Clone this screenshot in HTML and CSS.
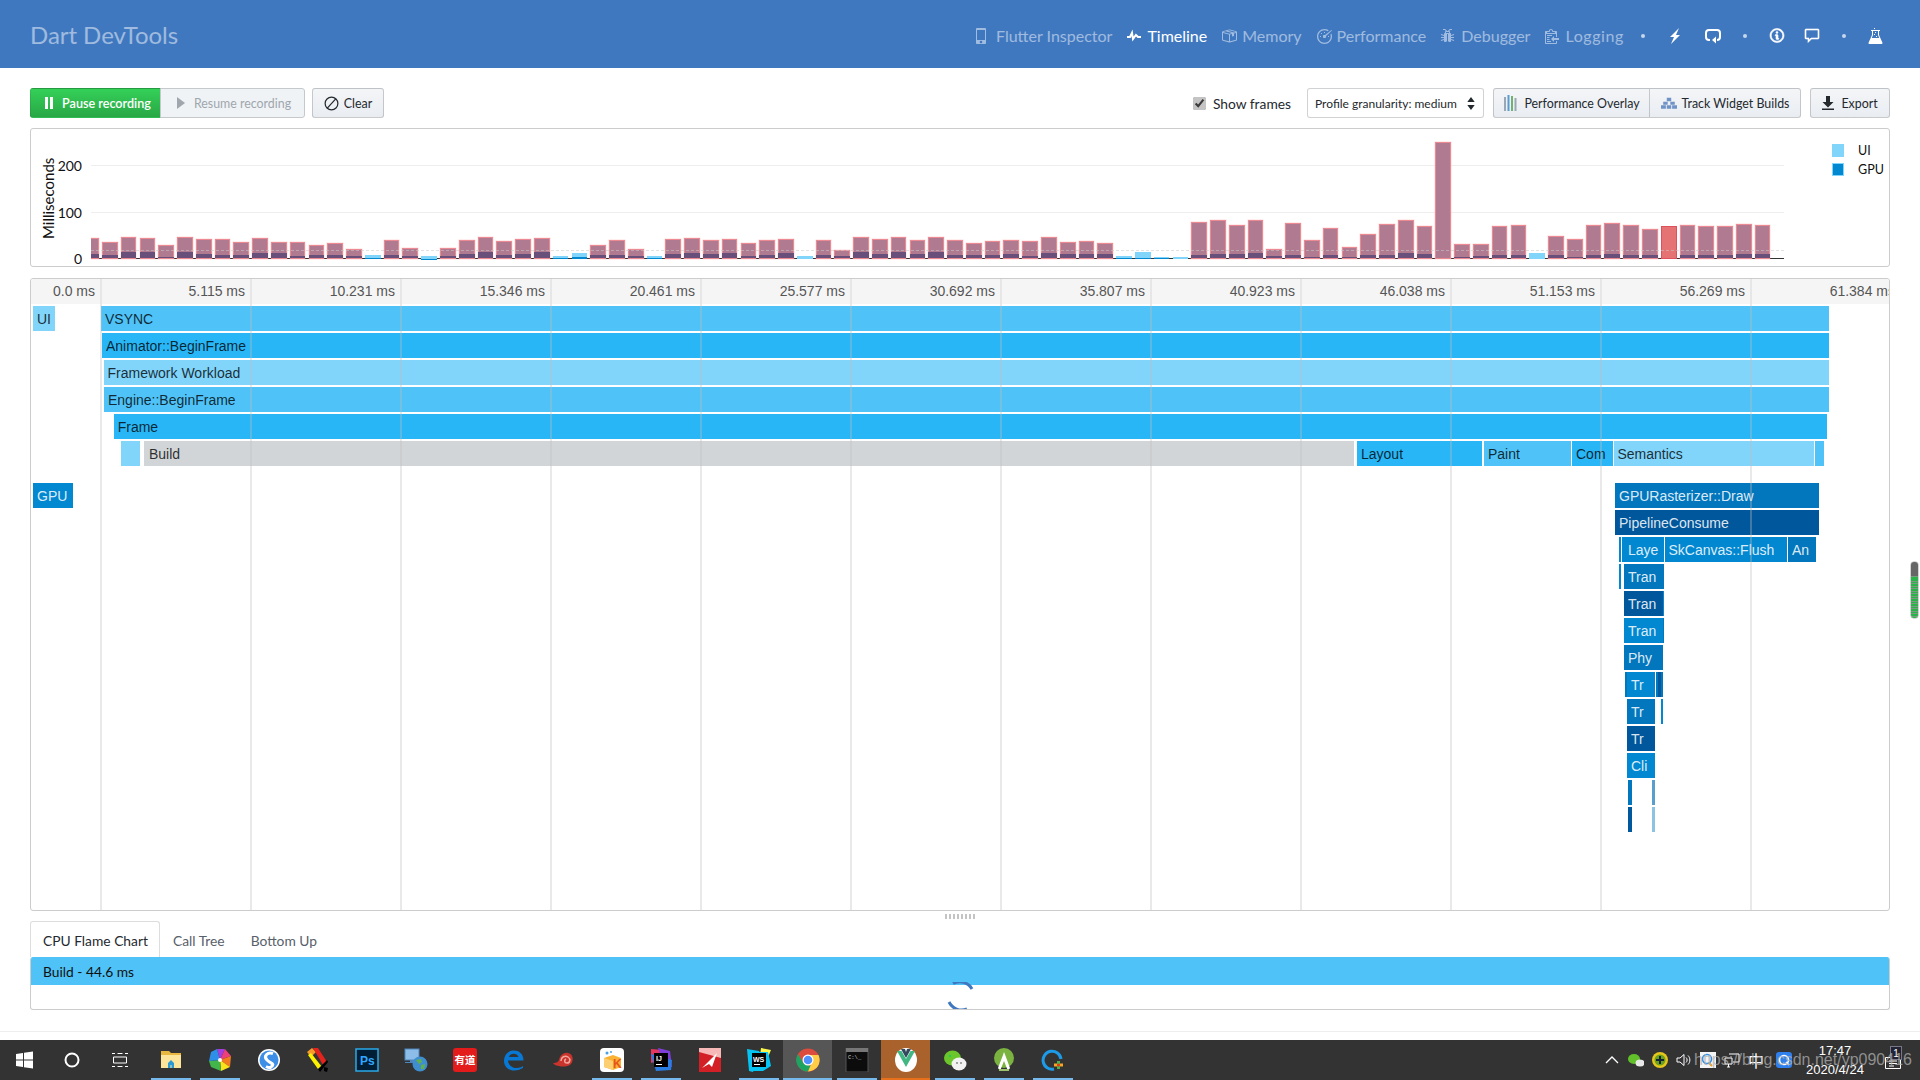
FILE: index.html
```html
<!DOCTYPE html>
<html lang="en">
<head>
<meta charset="utf-8">
<title>Dart DevTools</title>
<link rel="stylesheet" href="styles.css">
</head>
<body>
<header class="masthead">
  <div class="brand">Dart DevTools</div>
  <nav class="nav">
    <a class="tab"><svg class="ic" viewBox="0 0 16 16"><path transform="translate(1)" d="M9 0H1C.45 0 0 .45 0 1v14c0 .55.45 1 1 1h8c.55 0 1-.45 1-1V1c0-.55-.45-1-1-1zM5 15.3c-.72 0-1.3-.58-1.3-1.3 0-.72.58-1.3 1.3-1.3.72 0 1.3.58 1.3 1.3 0 .72-.58 1.3-1.3 1.3zM9 12H1V2h8v10z"/></svg>Flutter Inspector</a>
    <a class="tab active"><svg class="ic" viewBox="0 0 16 16"><path transform="translate(1)" d="M11.5 8L8.8 5.4 6.6 8.5 5.5 1.6 2.38 8H0v2h3.6l.9-1.8.9 5.4L9 8.5l1.6 1.5H14V8h-2.5z"/></svg>Timeline</a>
    <a class="tab"><svg class="ic" viewBox="0 0 16 16"><path d="M1 4.27v7.47c0 .45.3.84.75.97l6.5 1.73c.16.05.34.05.5 0l6.5-1.73c.45-.13.75-.52.75-.97V4.27c0-.45-.3-.84-.75-.97l-6.5-1.74a1.4 1.4 0 0 0-.5 0L1.75 3.3c-.45.13-.75.52-.75.97zm7 9.09l-6-1.59V5l6 1.61v6.75zM2 4l2.5-.67L11 5.06l-2.5.67L2 4zm13 7.77l-6 1.59V6.61l2-.55V8.5l2-.53V5.53L15 5v6.77zm-2-7.24L6.5 2.8l2-.53L15 4l-2 .53z"/></svg>Memory</a>
    <a class="tab"><svg class="ic" viewBox="0 0 16 16"><path d="M9 5H8V4h1v1zm4 3h-1v1h1V8zM6 5H5v1h1V5zM5 8H4v1h1V8zm11-5.5l-.5-.5L9 7c-.06-.02-1 0-1 0-.55 0-1 .45-1 1v1c0 .55.45 1 1 1h1c.55 0 1-.45 1-1v-.92l6-5.58zm-1.59 4.09c.19.61.3 1.25.3 1.91 0 3.42-2.78 6.2-6.2 6.2-3.42 0-6.21-2.78-6.21-6.2 0-3.42 2.78-6.2 6.2-6.2 1.2 0 2.31.34 3.27.94l.94-.94A7.459 7.459 0 0 0 8.51 1C4.36 1 1 4.36 1 8.5 1 12.64 4.36 16 8.5 16c4.14 0 7.5-3.36 7.5-7.5 0-1.03-.2-2.02-.59-2.91l-1 1z"/></svg>Performance</a>
    <a class="tab"><svg class="ic" viewBox="0 0 16 16"><path d="M11 10h3V9h-3V8l3.17-1.03-.34-.94L11 7V6c0-.55-.45-1-1-1V4c0-.48-.36-.88-.83-.97L10.2 2H12V1H9.8l-2 2h-.59L5.2 1H3v1h1.8l1.03 1.03C5.36 3.12 5 3.51 5 4v1c-.55 0-1 .45-1 1v1l-2.83-.97-.34.94L4 8v1H1v1h3v1L.83 12.03l.34.94L4 12v1c0 .55.45 1 1 1h1l1-1V6h1v7l1 1h1c.55 0 1-.45 1-1v-1l2.83.97.34-.94L11 11v-1zM9 5H6V4h3v1z"/></svg>Debugger</a>
    <a class="tab spaced"><svg class="ic" viewBox="0 0 16 16"><path transform="translate(1)" d="M2 13h4v1H2v-1zm5-6H2v1h5V7zm2 3V8l-3 3 3 3v-2h5v-2H9zM4.5 9H2v1h2.5V9zM2 12h2.5v-1H2v1zm9 1h1v2c-.02.28-.11.52-.3.7-.19.18-.42.28-.7.3H1c-.55 0-1-.45-1-1V4c0-.55.45-1 1-1h3c0-1.11.89-2 2-2 1.11 0 2 .89 2 2h3c.55 0 1 .45 1 1v5h-1V6H1v9h10v-2zM2 5h8c0-.55-.45-1-1-1H8c-.55 0-1-.45-1-1s-.45-1-1-1-1 .45-1 1-.45 1-1 1H3c-.55 0-1 .45-1 1z"/></svg>Logging</a>
    <div class="nav-actions">
      <i class="dot"></i>
      <svg class="ic white" viewBox="0 0 16 16"><path transform="translate(3)" d="M10 7H6l3-7-9 9h4l-3 7 9-9z"/></svg>
      <svg class="ic white" viewBox="0 0 16 16"><path d="M5 12H4a3 3 0 0 1-3-3V5a3 3 0 0 1 3-3h8a3 3 0 0 1 3 3v4a3 3 0 0 1-3 3" fill="none" stroke="#fff" stroke-width="2"/><path d="M11 8.500L7 12l4 3.500z"/></svg>
      <i class="dot"></i>
      <svg class="ic white heavy" viewBox="0 0 16 16"><path transform="translate(1 -.5)" d="M6.3 5.69a.942.942 0 0 1-.28-.7c0-.28.09-.52.28-.7.19-.18.42-.28.7-.28.28 0 .52.09.7.28.18.19.28.42.28.7 0 .28-.09.52-.28.7a1 1 0 0 1-.7.3c-.28 0-.52-.11-.7-.3zM8 7.990c-.02-.25-.11-.48-.31-.69-.2-.19-.42-.3-.69-.31H6c-.27.02-.48.13-.69.31-.2.2-.3.44-.31.69h1v3c.02.27.11.5.31.69.2.2.42.31.69.31h1c.27 0 .48-.11.69-.31.2-.19.3-.42.31-.69H8V7.980v.01zM7 2.300c-3.140 0-5.700 2.540-5.700 5.680 0 3.140 2.560 5.700 5.700 5.700s5.700-2.550 5.700-5.700c0-3.150-2.560-5.690-5.700-5.690v.01zM7 .98c3.860 0 7 3.140 7 7s-3.140 7-7 7-7-3.120-7-7 3.140-7 7-7z"/></svg>
      <svg class="ic white tuck heavy" viewBox="0 0 16 16"><path d="M14 1H2c-.55 0-1 .45-1 1v8c0 .55.45 1 1 1h2v3.500L7.500 11H14c.55 0 1-.45 1-1V2c0-.55-.45-1-1-1zm0 9H7l-2 2v-2H2V2h12v8z"/></svg>
      <i class="dot"></i>
      <svg class="ic white" viewBox="0 0 16 16"><path d="M14.380 14.590L11 7V3h1V2H3v1h1v4L.63 14.590A1 1 0 0 0 1.540 16h11.940c.72 0 1.200-.75.91-1.410h-.01zM3.750 10L5 7V3h5v4l1.250 3h-7.500zM8 8h1v1H8V8zM7 7H6V6h1v1zm0-3h1v1H7V4zm0-3H6V0h1v1z"/></svg>
    </div>
  </nav>
</header>

<main class="content">
  <div class="toolbar">
    <div class="btn-group">
      <button class="btn primary w-pause"><svg class="bi" viewBox="0 0 10 12"><path d="M1 0h3v12H1zM6 0h3v12H6z"/></svg>Pause recording</button>
      <button class="btn disabled w-resume"><svg class="bi" viewBox="0 0 10 12"><path d="M1 0l8 6-8 6z"/></svg>Resume recording</button>
    </div>
    <button class="btn w-clear"><svg class="bi big" viewBox="0 0 16 16"><circle cx="8" cy="8" r="6.800" fill="none" stroke="#24292e" stroke-width="1.300"/><path d="M3.500 13l9-10" stroke="#24292e" stroke-width="1.300"/></svg>Clear</button>
    <div class="spacer"></div>
    <label class="check"><input type="checkbox" checked>Show frames</label>
    <div class="select">Profile granularity: medium<svg class="updown" viewBox="0 0 8 14"><path d="M4 0l4 5.500H0zM4 14L0 8.500h8z"/></svg></div>
    <div class="btn-group">
      <button class="btn w-overlay"><svg class="bi wide" viewBox="0 0 16 16"><path fill="#9aa7b5" d="M1 2h2v14H1z"/><path fill="#5b9bd5" d="M4.500 0h2v16h-2z"/><path fill="#6fb36f" d="M8 1h2v15H8z"/><path fill="#9aa7b5" d="M11.500 3h2v13h-2z"/></svg>Performance Overlay</button>
      <button class="btn w-track"><svg class="bi wide" viewBox="0 0 18 14"><path fill="#6f93c7" d="M6.500 1h5v4h-5zM2.500 5.500h5v3.500h-5zM10.500 5.500h5v3.500h-5zM0 9.500h5.500v4H0zM6.500 9.500h5v4h-5zM12.500 9.500H18v4h-5.500z"/></svg>Track Widget Builds</button>
    </div>
    <button class="btn w-export"><svg class="bi dl" viewBox="0 0 12 14"><path d="M4 0h4v6h3.500L6 11.500.5 6H4zM0 12.500h12V14H0z"/></svg>Export</button>
  </div>

  <section class="panel chart">
    <div class="y-title">Milliseconds</div>
    <div class="plot">
      <span class="grid g200"><b>200</b></span>
      <span class="grid g100"><b>100</b></span>
      <span class="grid g0"><b>0</b></span>
      <div class="bars" id="bars"></div>
      <span class="target"></span>
    </div>
    <ul class="legend">
      <li><i class="sw sw-ui"></i>UI</li>
      <li><i class="sw sw-gpu"></i>GPU</li>
    </ul>
  </section>

  <section class="panel flame">
    <div class="ticks">
      <span class="tick first">0.0 ms</span><span class="tick">5.115 ms</span><span class="tick">10.231 ms</span><span class="tick">15.346 ms</span><span class="tick">20.461 ms</span><span class="tick">25.577 ms</span><span class="tick">30.692 ms</span><span class="tick">35.807 ms</span><span class="tick">40.923 ms</span><span class="tick">46.038 ms</span><span class="tick">51.153 ms</span><span class="tick">56.269 ms</span><span class="tick">61.384 ms</span>
    </div>
    <div class="flame-area">
      <div class="row"><span class="fb a3" style="left:2px;width:22px">UI</span><span class="fb a2" style="left:70px;width:1728px">VSYNC</span></div>
      <div class="row"><span class="fb a1" style="left:71px;width:1727px">Animator::BeginFrame</span></div>
      <div class="row"><span class="fb a3" style="left:72.500px;width:1725.500px">Framework Workload</span></div>
      <div class="row"><span class="fb a2" style="left:73px;width:1725px">Engine::BeginFrame</span></div>
      <div class="row"><span class="fb a1" style="left:82.700px;width:1713.300px">Frame</span></div>
      <div class="row"><span class="fb a3" style="left:90px;width:19px"></span><span class="fb grey" style="left:113px;width:1210px">Build</span><span class="fb a1" style="left:1326px;width:125px">Layout</span><span class="fb a2" style="left:1453px;width:87px">Paint</span><span class="fb a1" style="left:1541px;width:41px">Com</span><span class="fb a3" style="left:1582.500px;width:200.500px">Semantics</span><span class="fb a2" style="left:1784px;width:9px"></span></div>
      <div class="row group"><span class="fb b1" style="left:2px;width:40px">GPU</span><span class="fb b2" style="left:1584px;width:204px">GPURasterizer::Draw</span></div>
      <div class="row"><span class="fb b3" style="left:1584px;width:204px">PipelineConsume</span></div>
      <div class="row"><span class="fb b1" style="left:1587.500px;width:2.500px"></span><span class="fb b1" style="left:1591px;width:1.500px"></span><span class="fb b1" style="left:1593px;width:40px">Laye</span><span class="fb b1" style="left:1633.500px;width:122.500px">SkCanvas::Flush</span><span class="fb b2" style="left:1757px;width:28px">An</span></div>
      <div class="row"><span class="fb b1" style="left:1588px;width:1.500px"></span><span class="fb b2" style="left:1593px;width:40px">Tran</span></div>
      <div class="row"><span class="fb b3" style="left:1593px;width:39px">Tran</span><span class="fb b1" style="left:1632px;width:1px"></span></div>
      <div class="row"><span class="fb b1" style="left:1593px;width:39px">Tran</span><span class="fb b2" style="left:1632px;width:1px"></span></div>
      <div class="row"><span class="fb b2" style="left:1593px;width:39px">Phy</span></div>
      <div class="row"><span class="fb b2" style="left:1594px;width:2px"></span><span class="fb b1" style="left:1596px;width:28px">Tr</span><span class="fb b2" style="left:1624.500px;width:2px"></span><span class="fb b3" style="left:1627px;width:2.500px"></span><span class="fb b2" style="left:1630px;width:2px"></span></div>
      <div class="row"><span class="fb b2" style="left:1596px;width:28px">Tr</span><span class="fb b1" style="left:1630px;width:1.500px"></span></div>
      <div class="row"><span class="fb b3" style="left:1596px;width:28px">Tr</span></div>
      <div class="row"><span class="fb b1" style="left:1596px;width:28px">Cli</span></div>
      <div class="row"><span class="fb b2" style="left:1597px;width:3.500px"></span><span class="fb b4" style="left:1620.500px;width:3.500px"></span></div>
      <div class="row"><span class="fb b3" style="left:1597px;width:3.500px"></span><span class="fb b5" style="left:1620.500px;width:3.500px"></span></div>
      <div class="rules" aria-hidden="true">
        <i class="rule first"></i><i class="rule"></i><i class="rule"></i><i class="rule"></i><i class="rule"></i><i class="rule"></i><i class="rule"></i><i class="rule"></i><i class="rule"></i><i class="rule"></i><i class="rule"></i><i class="rule"></i>
      </div>
    </div>
  </section>

  <div class="splitter"></div>

  <div class="tabs">
    <span class="subtab on">CPU Flame Chart</span>
    <span class="subtab">Call Tree</span>
    <span class="subtab">Bottom Up</span>
  </div>
  <section class="panel details">
    <div class="details-bar">Build - 44.6 ms</div>
    <svg class="spinner" viewBox="0 0 30 30"><path d="M8 1.500A14 14 0 0 1 27 7M4 20A14 14 0 0 0 22 27" fill="none" stroke="#4078c0" stroke-width="3"/></svg>
  </section>
</main>
<div class="footer-line"></div>

<div class="scroll-thumb"></div>

<footer class="taskbar">
  <span class="slot narrow"><svg class="ti" viewBox="0 0 24 24"><path fill="#fff" d="M4 6l7-1v6.500H4zM12 4.800l9-1.300v8H12zM4 12.500h7V19l-7-1zM12 12.500h9v8l-9-1.300z"/></svg></span>
  <span class="slot narrow"><svg class="ti" viewBox="0 0 24 24"><circle cx="12" cy="12" r="6.500" fill="none" stroke="#fff" stroke-width="2"/></svg></span>
  <span class="slot narrow after"><svg class="ti" viewBox="0 0 24 24"><path fill="none" stroke="#fff" d="M4 5.500h3M9.500 5.500h5M17 5.500h3M4 18.500h3M9.500 18.500h5M17 18.500h3M5.500 9h13v6h-13z"/></svg></span>
  <span class="slot run"><svg class="ti" viewBox="0 0 24 24"><path fill="#e8b740" d="M2 3h8l2 2h10v3H2z"/><path fill="#fde49b" d="M2 7h20v13H2z"/><path fill="#2a9ad4" d="M9 20v-5l3-3 3 3v5h-2.500v-3h-1v3z"/></svg></span>
  <span class="slot run"><svg class="ti" viewBox="0 0 24 24"><path fill="#a33de0" d="M12 12L9 1h8z"/><path fill="#ec3f7c" d="M12 12l5-11 6 7z"/><path fill="#f47c20" d="M12 12l11-4-1 11z"/><path fill="#fbe21a" d="M12 12l10 7-9 4z"/><path fill="#42b64a" d="M12 12l1 11-10-4-2-6z"/><path fill="#2d8fe8" d="M12 12L1 13l2-9 6-3z"/><circle cx="12" cy="12" r="2" fill="#fff"/></svg></span>
  <span class="slot"><svg class="ti" viewBox="0 0 24 24"><circle cx="12" cy="12" r="11" fill="#fff"/><circle cx="12" cy="12" r="9.500" fill="#3d8ee6"/><path d="M16 5.500C11 3.500 6 8 10 12s8.500 3.500 4 7c-1 .8-3 .6-5-.5" fill="none" stroke="#fff" stroke-width="3"/></svg></span>
  <span class="slot"><svg class="ti" viewBox="0 0 24 24"><path fill="#f59b2b" d="M1 4l5-4 4 4-5 5z"/><path fill="#e3231c" d="M7 0h5l9 14-4 3z"/><path fill="#fff200" d="M2 7l3-2 11 14-4 2z"/><path fill="#000" d="M12 21l9-9 1 2-8 10zM18 19l4 1-1 4-3-1z"/></svg></span>
  <span class="slot"><svg class="ti" viewBox="0 0 24 24"><rect x="1" y="1" width="22" height="22" fill="#001e36" stroke="#2aa9e8" stroke-width="1.500"/><text class="svgt" x="5" y="17" fill="#31a8ff">Ps</text></svg></span>
  <span class="slot"><svg class="ti" viewBox="0 0 24 24"><rect x="1" y="1" width="14" height="11" fill="#8bbde8" stroke="#4f86bf"/><path fill="#4f86bf" d="M6 12h4v3H1v-1h5z"/><circle cx="16" cy="16" r="7.500" fill="#3f8fd0"/><path fill="#62b04c" d="M12 12l5-1 1 3-3 2zM17 17l4-1-1 5-3 0z"/></svg></span>
  <span class="slot"><svg class="ti" viewBox="0 0 24 24"><rect x="0" y="0" width="24" height="24" rx="3" fill="#e31b1b"/><text class="svgc" x="12" y="16" fill="#fff" text-anchor="middle">有道</text></svg></span>
  <span class="slot"><svg class="ti" viewBox="0 0 24 24"><path d="M21 18c-3 2.800-14 4-15-5.500h15.500C21.500 5 16 2 11 2.500 5 3 2 8 2 13c0 6 5 9.500 10 9.500 4 0 7-1.500 9-2.500zM7 9c1-4 8-4.500 9.500 0z" fill="#0878d4"/></svg></span>
  <span class="slot"><svg class="ti" viewBox="0 0 24 24"><path fill="#c9342c" d="M2 15c4 0 5-1 6-3 1-5 5-8 9-7 5 1 6 7 3 11-3 3-9 3-12 2-2 0-5-1-6-3z"/><path fill="none" stroke="#f4a79f" stroke-width="1.500" d="M10 13c0-4 4-6 7-4s2 6-1 6-3-3-1-4"/></svg></span>
  <span class="slot run"><svg class="ti" viewBox="0 0 24 24"><rect width="24" height="24" rx="4" fill="#fff"/><path fill="#f9b233" d="M4 10l9-3 8 3v9l-8 3-9-3z"/><path fill="#fcd072" d="M4 10l9 3v9l-9-3z"/><circle cx="7" cy="5" r="1.500" fill="#4aa0e6"/><circle cx="11" cy="4" r="1" fill="#4aa0e6"/><text class="svgt" x="13" y="20" fill="#e8541c">K</text></svg></span>
  <span class="slot run"><svg class="ti" viewBox="0 0 24 24"><path fill="#e4365e" d="M2 1l12 1 3 8-15 5z"/><path fill="#7d3fd8" d="M9 0l12 3 2 16-8-1z"/><path fill="#2a7de1" d="M2 6l5 17 15-1 1-10z"/><rect x="5" y="5" width="14" height="14" fill="#000"/><text class="svgs" x="7" y="13" fill="#fff">IJ</text><path fill="#fff" d="M7 16h6v1H7z"/></svg></span>
  <span class="slot"><svg class="ti" viewBox="0 0 24 24"><rect x="1" width="22" height="24" fill="#d31f26"/><path fill="#f7b9b7" d="M1 0h22v10L1 4z"/><path fill="#fff" d="M4 20L19 5l-5 14-3-3z"/></svg></span>
  <span class="slot run"><svg class="ti" viewBox="0 0 24 24"><path fill="#07c3f2" d="M0 1l12 2 2 4-8 17-4-1z"/><path fill="#fcf84a" d="M14 0l10 2-3 7-8-1z"/><path fill="#07c3f2" d="M12 4l9 0 3 14-8 5H6z"/><rect x="5" y="5" width="14" height="14" fill="#000"/><text class="svgs" x="6" y="13.500" fill="#fff">WS</text><path fill="#fff" d="M7 16h6v1H7z"/></svg></span>
  <span class="slot run hot"><svg class="ti" viewBox="0 0 24 24"><circle cx="12" cy="12" r="11.500" fill="#dd4b3e"/><path fill="#1da462" d="M12 23.500A11.500 11.500 0 0 1 2 6l6 10 7 2z"/><path fill="#ffcd45" d="M12 23.500A11.500 11.500 0 0 0 22.500 7H12l4 7z"/><circle cx="12" cy="12" r="5.500" fill="#fff"/><circle cx="12" cy="12" r="4.300" fill="#4d90fe"/></svg></span>
  <span class="slot run"><svg class="ti" viewBox="0 0 24 24"><rect x="1" width="22" height="24" fill="#0c0c0c" stroke="#555"/><rect x="1" width="22" height="4" fill="#777"/><text class="svgm" x="3" y="11" fill="#ccc">C:\_</text></svg></span>
  <span class="slot run vue"><svg class="ti" viewBox="0 0 24 24"><ellipse cx="12" cy="12" rx="11" ry="12" fill="#fff"/><path fill="#41b883" d="M3 3h4.500L12 11l4.500-8H21L12 19z"/><path fill="#35495e" d="M7 1h4l1 3 1-3h4l-5 9z"/></svg></span>
  <span class="slot run"><svg class="ti" viewBox="0 0 24 24"><ellipse cx="9.500" cy="10" rx="8.500" ry="7.500" fill="#6cc62b"/><circle cx="7" cy="8" r="1.200" fill="#2c5"/><ellipse cx="16" cy="16" rx="7.500" ry="6.500" fill="#f2f2f2"/><circle cx="14" cy="15" r="1" fill="#888"/><circle cx="18" cy="15" r="1" fill="#888"/></svg></span>
  <span class="slot run"><svg class="ti" viewBox="0 0 24 24"><circle cx="12" cy="10" r="10" fill="#7bb340"/><path fill="#fff" d="M12 4l1.200 3 4.800 13-2 3-4-10-4 10-2-3L11 7z"/><path d="M7 22h10" stroke="#9bc46c" stroke-width="2"/></svg></span>
  <span class="slot run"><svg class="ti" viewBox="0 0 24 24"><path d="M13 21A9 9 0 1 1 20 11" fill="none" stroke="#1d9be8" stroke-width="3"/><path d="M13 17h9" stroke="#f5a623" stroke-width="3"/><path d="M17.500 13v8" stroke="#4caf50" stroke-width="3"/><circle cx="17.500" cy="17" r="1.500" fill="#e8341c"/></svg></span>

  <div class="tray">
    <svg class="tr" viewBox="0 0 16 16"><path d="M2 11l6-6 6 6" fill="none" stroke="#fff" stroke-width="1.300"/></svg>
    <svg class="tr" viewBox="0 0 16 16"><ellipse cx="6" cy="7" rx="6" ry="5" fill="#62c02a"/><ellipse cx="12" cy="11" rx="4.500" ry="3.500" fill="#e8e8e8"/></svg>
    <svg class="tr" viewBox="0 0 16 16"><circle cx="8" cy="8" r="8" fill="#e5c61b"/><circle cx="8" cy="8" r="5.500" fill="#6aa01e"/><path d="M7 4h2v3h3v2H9v3H7V9H4V7h3z" fill="#123"/></svg>
    <svg class="tr" viewBox="0 0 16 16"><path d="M1 6h3l4-3.500v11L4 10H1zM10 5.500c1.500 1.500 1.500 3.500 0 5M12 3.500c2.500 2.500 2.500 6.500 0 9" fill="none" stroke="#fff"/></svg>
    <svg class="tr" viewBox="0 0 16 16"><rect width="16" height="16" fill="#f4f4f4"/><circle cx="7" cy="7" r="4.500" fill="none" stroke="#2f8fe8" stroke-width="1.600"/><path d="M9 11l3 3" stroke="#f0a020" stroke-width="2"/></svg>
    <svg class="tr" viewBox="0 0 16 16"><path d="M5 2h10v8H9M1 6h7v6H1zM3 15h3M4.500 12v3" fill="none" stroke="#fff"/></svg>
    <span class="ime">中</span>
    <svg class="tr last" viewBox="0 0 16 16"><rect width="16" height="16" rx="3" fill="#2f80ed"/><circle cx="8" cy="8" r="4.500" fill="none" stroke="#fff" stroke-width="1.600"/><path d="M10 10l3 3" stroke="#fff" stroke-width="1.600"/></svg>
    <div class="clock"><span>17:47</span><span>2020/4/24</span></div>
    <div class="notify">
      <svg class="tr bell" viewBox="0 0 16 16"><path d="M.5 2.500h15v11H.5zM4 6h8M4 8.500h8M4 11h5" fill="none" stroke="#fff"/></svg>
      <span class="badge">1</span>
    </div>
  </div>
  <span class="watermark">https://blog.csdn.net/yp090416</span>
</footer>
<script src="app.js"></script>
</body>
</html>
```
FILE: styles.css
```css
* { box-sizing: border-box; }
html, body { margin: 0; height: 100%; }
body {
  width: 1920px; height: 1080px; overflow: hidden; position: relative;
  display: flex; flex-direction: column; background: #fff;
  font-family: Lato, "Open Sans", sans-serif; color: #24292e;
}

/* masthead */
.masthead {
  flex: 0 0 68px; display: flex; align-items: center; justify-content: space-between;
  background: #4078c0; padding: 0 36px 0 30px;
}
.brand { font-size: 24px; color: rgba(255,255,255,.5); letter-spacing: -.05px; }
.nav { display: flex; align-items: center; gap: 14px; padding-top: 3px; }
.tab { display: flex; align-items: center; gap: 5px; font-size: 16px; color: rgba(255,255,255,.5); }
.tab.active { color: #fff; }
.tab.spaced { letter-spacing: .6px; }
.ic { width: 16px; height: 16px; fill: currentColor; flex: none; }
.ic.white { fill: #fff; }
.heavy { stroke: #fff; stroke-width: .6px; }
.nav-actions { display: flex; align-items: center; gap: 22px; margin-left: 3px; }
.tuck { margin-left: -3px; }
.dot { width: 4px; height: 4px; border-radius: 50%; background: rgba(255,255,255,.7); }

/* content */
.content { flex: none; padding: 20px 30px 0; display: flex; flex-direction: column; }
.toolbar { display: flex; align-items: center; height: 30px; }
.spacer { flex: 1; }
.btn-group { display: flex; }
.btn {
  height: 30px; display: flex; align-items: center; justify-content: center; gap: 5px; padding: 0;
  border: 1px solid rgba(27,31,35,.2); border-radius: 3px;
  background: linear-gradient(#f4f5f7, #e9edf2); font: 600 12.400px Lato, sans-serif; color: #24292e;
}
.btn-group .btn:first-child { border-radius: 3px 0 0 3px; }
.btn-group .btn:last-child { border-radius: 0 3px 3px 0; margin-left: -1px; }
.primary { background: linear-gradient(#34d058, #28a745); color: #fff; border-color: rgba(27,31,35,.1); padding-left: 4px; font-size: 12.600px; }
.disabled { background: #eff3f6; color: #9fa6ad; border-color: #c6c9cc; font-weight: 400; padding-left: 2px; }
.bi { width: 10px; height: 12px; fill: currentColor; flex: none; margin-right: 3px; }
.big { width: 15px; height: 15px; margin-right: 0; }
.wide { width: 16px; height: 16px; margin-right: 0; }
.dl { width: 12px; height: 14px; margin-right: 2px; }
.w-pause { width: 131px; }
.w-resume { width: 145px; }
.w-clear { width: 72px; margin-left: 7px; font-weight: 400; }
.w-overlay { width: 157px; font-weight: 400; }
.w-track { width: 152px; font-weight: 400; }
.w-export { width: 80px; margin-left: 9px; font-weight: 400; }
.check { display: flex; align-items: center; gap: 7px; font-size: 13.800px; margin-right: 16px; }
.check input { margin: 0; width: 13px; height: 13px; accent-color: #c4c4c4; }
.select {
  width: 177px; height: 30px; margin-right: 9px; padding: 0 8px 0 7px; display: flex; align-items: center; justify-content: space-between;
  border: 1px solid rgba(27,31,35,.2); border-radius: 3px; font-size: 12px; background: #fff;
}
.updown { width: 8px; height: 13px; fill: #24292e; }

/* panels */
.panel { border: 1px solid #ccc; border-radius: 3px; background: #fff; overflow: hidden; }

/* frame chart */
.chart { height: 139px; margin-top: 10px; display: flex; position: relative; }
.y-title {
  position: absolute; left: 9px; top: 27px; height: 84px; width: 16px; line-height: 16px; white-space: nowrap;
  writing-mode: vertical-rl; transform: rotate(180deg); text-align: center; font-size: 15px; color: #111;
}
.plot { position: relative; width: 1693px; height: 130px; margin-left: 60px; flex: none; }
.grid { position: absolute; left: 0; right: 0; height: 1px; background: #eee; }
.grid b { position: absolute; right: calc(100% + 9px); top: -8px; font: 400 14px/18px Lato, sans-serif; color: #111; }
.g200 { bottom: 93px; }
.g100 { bottom: 46px; }
.g0 { bottom: 0; background: #333; }
.bars { position: absolute; left: -7.800px; right: 0; bottom: 0; height: 130px; display: flex; align-items: flex-end; gap: 3.100px; }
.bar { flex: 0 0 15.700px; display: flex; flex-direction: column; justify-content: flex-end; }
.bar.jank { background: #b07a90; border: 1px solid #ec8a94; box-shadow: 0 0 0 .5px rgba(255,150,150,.35); }
.bar.jank b { display: block; background: #68507a; margin: 0 -1px; }
.bar.fine { background: #81d4fa; }
.bar.fine b { display: block; background: #0288d1; }
.bar.sel { background: #e57373; border: 1px solid #e0505c; }
.clip-first { clip-path: inset(-2px -2px -2px 7.800px); }
.target { position: absolute; left: 0; right: 0; bottom: 8px; border-top: 1px dashed rgba(200,200,200,.55); }
.legend { list-style: none; margin: 0 0 0 48px; padding: 15px 0 0; font-size: 12.500px; color: #111; }
.legend li { display: flex; align-items: center; height: 13px; margin-bottom: 6px; gap: 14px; }
.sw { width: 12px; height: 13px; }
.sw-ui { background: #81d4fa; }
.sw-gpu { background: #0288d1; border: 1px solid #81d4fa; }

/* flame chart */
.flame { height: 633px; margin-top: 11px; display: flex; flex-direction: column; position: relative; }
.ticks { flex: 0 0 25px; display: flex; background: #f5f5f5; font: 14px/25px "Liberation Sans", sans-serif; color: #555; }
.tick { flex: 0 0 150px; text-align: right; padding-right: 5px; border-right: 2px solid #e6e6e6; white-space: nowrap; }
.tick.first { flex-basis: 71px; }
.flame-area { flex: 1; position: relative; padding-top: 2px; font: 14px/26px "Liberation Sans", sans-serif; }
.row { position: relative; height: 25px; margin-bottom: 2px; }
.row.group { margin-top: 17px; }
.fb { position: absolute; top: 0; height: 25px; padding-left: 4px; overflow: hidden; white-space: nowrap; color: rgba(0,0,0,.8); }
.fb:empty { padding: 0; }
.a1 { background: #29b6f6; }
.a2 { background: #4fc3f7; }
.a3 { background: #81d4fa; }
.grey { background: #d2d5d8; padding-left: 5px; }
.b1, .b2, .b3, .b4, .b5 { color: rgba(255,255,255,.87); }
.b1 { background: #0288d1; }
.b2 { background: #0277bd; }
.b3 { background: #01579b; }
.b4 { background: #5a9fcb; }
.b5 { background: #8cc3e2; }
.rules { position: absolute; inset: 0; display: flex; pointer-events: none; }
.rule { flex: 0 0 150px; border-right: 2px solid rgba(190,190,190,.34); }
.rule.first { flex-basis: 71px; }

/* splitter and tabs */
.splitter {
  height: 10px; margin: 0 auto; width: 31px;
  background: repeating-linear-gradient(90deg, #c4c4c4 0 2px, transparent 2px 4px) 0 3px / 100% 5px no-repeat;
}
.tabs { height: 36px; display: flex; font-size: 13.800px; }
.subtab { display: flex; align-items: center; padding: 2px 13px 0; color: #586069; }
.subtab.on { width: 130px; padding: 2px 0 0 12px; color: #24292e; border: 1px solid #ddd; border-bottom: 0; border-radius: 3px 3px 0 0; white-space: nowrap; }
.details { height: 53px; position: relative; border-top: 0; }
.details-bar { height: 28px; background: #4fc3f7; padding-left: 12px; font-size: 13.800px; line-height: 30px; color: #111; }
.spinner { position: absolute; left: 914px; top: 25px; width: 30px; height: 30px; }
.footer-line { height: 1px; margin-top: 21px; background: #eee; }

/* page scrollbar marker */
.scroll-thumb {
  position: absolute; left: 1911px; top: 562px; width: 7px; height: 56px; border-radius: 3px;
  background: linear-gradient(#666 0 14px, transparent 14px), repeating-linear-gradient(#2bb34b 0 1.500px, #7a9a7f 1.500px 2.500px);
  box-shadow: 0 0 0 .5px #aaa;
}

/* taskbar */
.taskbar {
  position: absolute; left: 0; right: 0; bottom: 0; height: 40px; display: flex; background: #333;
  font-family: "Liberation Sans", "Noto Sans CJK SC", sans-serif;
}
.slot { flex: 0 0 49px; height: 40px; display: flex; align-items: center; justify-content: center; position: relative; }
.slot.narrow { flex-basis: 48px; }
.slot.after { margin-right: 2px; }
.ti { width: 24px; height: 24px; }
.svgt { font: 700 12px "Liberation Sans", sans-serif; }
.svgs { font: 700 7px "Liberation Sans", sans-serif; }
.svgm { font: 400 5.500px "Liberation Mono", monospace; }
.svgc { font: 700 10.500px "Noto Sans CJK SC", sans-serif; }
.run::after { content: ""; position: absolute; left: 5px; right: 4px; bottom: 0; height: 2px; background: #76b9ed; }
.hot { background: #565656; }
.hot::after, .vue::after { left: 0; right: 0; }
.vue { background: #a9622c; }
.vue::after { background: #e8701a; }
.tray { margin-left: auto; display: flex; align-items: center; height: 40px; position: relative; padding-right: 17px; }
.tr { width: 16px; height: 16px; margin-right: 8px; flex: none; }
.tr.last { margin: 0 0 0 4px; }
.ime { width: 24px; font-size: 16px; color: #fff; }
.clock { width: 60px; margin-left: 13px; display: flex; flex-direction: column; align-items: center; font-size: 13px; line-height: 19px; color: #fff; }
.notify { position: relative; margin-left: 20px; width: 18px; }
.bell { margin: 6px 0 0; display: block; }
.badge { position: absolute; left: 5px; top: -3px; width: 12px; height: 14px; font-size: 10px; line-height: 13px; text-align: center; color: #fff; background: #223; border: 1px solid #778; }
.watermark { position: absolute; left: 1694px; top: 11px; font-size: 16px; line-height: 18px; color: rgba(175,175,175,.75); white-space: nowrap; }
```
FILE: app.js
```js
// frame chart: [total height, lower segment height] in px; a third value 1 marks a frame inside budget
var frames = [[20.7,4.3],[17.3,3.3],[22.3,6.3],[21.3,6.3],[13.7,1.3],[22.3,6.3],[20.3,4.3],[20,3.3],[17.3,3.3],[21.3,5.3],[17.3,5.3],[16.7,2.3],[14,3.3],[16,3.3],[10.3,2.3],[4.3,1.3,1],[19.3,3.3],[11.3,2.3],[3.3,.5,1],[11.3,2.3],[19.3,4.3],[22,6.3],[18,3.3],[20,4.3],[21,6.3],[3.3,1.3,1],[6.3,2.3,1],[14,3.3],[19.3,3.3],[10,2.3],[3.3,1.3,1],[20.3,4.3],[21.3,5.3],[19.3,4.3],[20.3,5.3],[16,2.3],[19.3,3.3],[19.7,5.3],[3.3,0,1],[19.3,3.3],[9,2.3],[21.7,6.3],[20.3,4.3],[22,6.3],[18.7,4.3],[22.3,6.3],[19.3,3.3],[15.7,3.3],[17.7,3.3],[19.3,4.3],[18,2.3],[21.7,5.3],[17.3,4.3],[18,4.3],[15.7,4.3],[3.3,1.3,1],[7.3,1.3,1],[2.3,1,1],[2.3,0,1],[37.3,3.3],[38.7,4.3],[34.3,4.3],[39.3,5.3],[10.3,2.3],[36,3.3],[19,1.3],[31,3.3],[11.7,1.3],[25,3.3],[34.7,3.3],[38.7,5.3],[33,4.3],[116.7,0],[15,1.3],[15,2.3],[32.7,3.3],[33.7,3.3],[6.3,0,1],[23,3.3],[20,1.3],[34.3,3.3],[35.7,4.3],[33.7,3.3],[30.3,3.3],[33,3.3],[34,3.3],[32.7,3.3],[33,3.3],[35,4.3],[34.3,4.3]];
var SELECTED = 84;
var host = document.getElementById('bars');
frames.forEach(function (f, i) {
  var bar = document.createElement('div');
  bar.className = 'bar ' + (f[2] ? 'fine' : i === SELECTED ? 'sel' : 'jank') + (i === 0 ? ' clip-first' : '');
  bar.style.height = f[0] + 'px';
  if (i !== SELECTED) {
    var low = document.createElement('b');
    low.style.height = f[1] + 'px';
    bar.appendChild(low);
  }
  host.appendChild(bar);
});
```
